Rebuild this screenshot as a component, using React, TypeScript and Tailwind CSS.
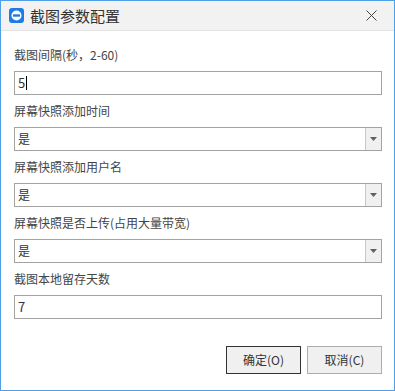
const font = { fontFamily: '"Noto Sans CJK SC", "Noto Sans", sans-serif' };

function Label({ text }: { text: string }) {
  return <div className="h-[32px] flex items-center text-[12px] text-[#444444] leading-none">{text}</div>;
}

function TextField({ value, caret }: { value: string; caret?: boolean }) {
  return (
    <div className="h-[24px] border border-[#a3a3a3] bg-white flex items-center pl-[3px] text-[13px] text-[#333333]">
      <span>{value}</span>
      {caret && <span className="ml-[1px] w-[1px] h-[14px] bg-black" />}
    </div>
  );
}

function SelectField({ value }: { value: string }) {
  return (
    <div className="h-[24px] border border-[#a3a3a3] bg-white flex items-stretch text-[12px] text-[#333333]">
      <div className="flex-1 flex items-center pl-[3px]">{value}</div>
      <div className="w-[16px] border-l border-[#c8c8c8] bg-[#f0f0f0] flex items-center justify-center">
        <svg width="7" height="4" viewBox="0 0 7 4">
          <path d="M0 0 H7 L3.5 4 Z" fill="#606060" />
        </svg>
      </div>
    </div>
  );
}

export default function App() {
  return (
    <div style={font} className="w-[395px] h-[391px] border border-[#4f9fe6] bg-white flex flex-col">
      <div className="h-[30px] bg-[#f2f2f2] border-b border-[#e4e4e4] flex items-center pl-[8px] pr-[17px]">
        <svg width="15" height="15" viewBox="0 0 15 15">
          <rect x="0" y="0" width="15" height="15" rx="3" fill="#1e7ae6" />
          <circle cx="7.5" cy="7.5" r="5" fill="#ffffff" />
          <rect x="4" y="6.3" width="7" height="2.4" fill="#1e7ae6" />
        </svg>
        <span className="ml-[6px] text-[15px] text-[#333333] leading-none">截图参数配置</span>
        <svg className="ml-auto" width="11" height="11" viewBox="0 0 11 11">
          <path d="M0.5 0.5 L10.5 10.5 M10.5 0.5 L0.5 10.5" stroke="#444444" strokeWidth="1" />
        </svg>
      </div>
      <div className="flex-1 flex flex-col pt-[8px] pl-[13px] pr-[12px]">
        <Label text="截图间隔(秒，2-60)" />
        <TextField value="5" caret />
        <Label text="屏幕快照添加时间" />
        <SelectField value="是" />
        <Label text="屏幕快照添加用户名" />
        <SelectField value="是" />
        <Label text="屏幕快照是否上传(占用大量带宽)" />
        <SelectField value="是" />
        <Label text="截图本地留存天数" />
        <TextField value="7" />
        <div className="mt-[27px] flex justify-end gap-[6px]">
          <button className="w-[75px] h-[28px] border border-[#333333] bg-[#f0f0f0] text-[12px] text-[#333333]">确定(O)</button>
          <button className="w-[75px] h-[28px] border border-[#adadad] bg-[#f0f0f0] text-[12px] text-[#333333]">取消(C)</button>
        </div>
      </div>
    </div>
  );
}
